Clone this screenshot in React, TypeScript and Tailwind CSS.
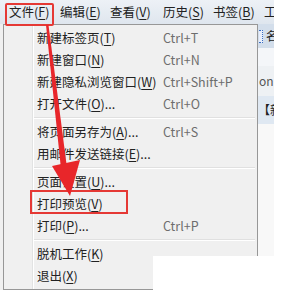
import React from "react";

const font = "font-['Noto_Sans_CJK_SC','Microsoft_YaHei',sans-serif]";

type Item = { pre: string; key: string; post?: string; sc?: string } | "sep";

const items: Item[] = [
  { pre: "新建标签页(", key: "T", post: ")", sc: "Ctrl+T" },
  { pre: "新建窗口(", key: "N", post: ")", sc: "Ctrl+N" },
  { pre: "新建隐私浏览窗口(", key: "W", post: ")", sc: "Ctrl+Shift+P" },
  { pre: "打开文件(", key: "O", post: ")...", sc: "Ctrl+O" },
  "sep",
  { pre: "将页面另存为(", key: "A", post: ")...", sc: "Ctrl+S" },
  { pre: "用邮件发送链接(", key: "E", post: ")..." },
  "sep",
  { pre: "页面设置(", key: "U", post: ")..." },
  { pre: "打印预览(", key: "V", post: ")" },
  { pre: "打印(", key: "P", post: ")...", sc: "Ctrl+P" },
  "sep",
  { pre: "脱机工作(", key: "K", post: ")" },
  { pre: "退出(", key: "X", post: ")" },
];

const bar = [
  { pre: "文件(", key: "F", w: "w-[51px]" },
  { pre: "编辑(", key: "E", w: "w-[50px]" },
  { pre: "查看(", key: "V", w: "w-[53px]" },
  { pre: "历史(", key: "S", w: "w-[50px]" },
  { pre: "书签(", key: "B", w: "w-[51px]" },
];

export default function App() {
  return (
    <div className={`relative w-[293px] h-[304px] overflow-hidden bg-white ${font} text-[12.5px] text-[#222]`}>
      <div className="flex flex-col">
        {/* menubar */}
        <div className="flex h-[24px] w-[274px] items-center overflow-hidden bg-gradient-to-b from-[#edf1f6] to-[#dfe6ee] pl-[9px] pt-[1px] leading-none">
          {bar.map((b) => (
            <div key={b.key} className={`${b.w} shrink-0 whitespace-nowrap`}>
              {b.pre}
              <span className="underline underline-offset-2">{b.key}</span>)
            </div>
          ))}
          <div className="shrink-0 whitespace-nowrap">工</div>
        </div>
        <div className="flex">
          <div className="w-[3px] h-[266px] bg-[#f0f0f0]" />
          {/* dropdown menu */}
          <div className="relative w-[255px] h-[266px] border border-[#979797] bg-[#f0f0f0] p-[2px]">
            <div className="absolute left-[28px] top-0 bottom-0 w-[2px] border-l border-[#e2e3e3] border-r border-r-white" />
            {items.map((it, i) =>
              it === "sep" ? (
                <div key={i} className="flex h-[6px] items-center pl-[27px]">
                  <div className="h-[2px] w-full border-t border-[#e0e0e0] border-b border-b-white" />
                </div>
              ) : (
                <div key={i} className="relative flex h-[22px] items-center whitespace-nowrap leading-none">
                  <div className="w-[157px] shrink-0 pl-[31px]">
                    {it.pre}
                    <span className="underline underline-offset-2">{it.key}</span>
                    {it.post}
                  </div>
                  {it.sc && <div className="text-[#6d6d6d]">{it.sc}</div>}
                </div>
              )
            )}
          </div>
          {/* strip of page behind */}
          <div className="flex w-[16px] flex-col overflow-hidden">
            <div className="flex h-[24px] items-center bg-[#d3deeb] whitespace-nowrap">
              <div className="ml-[1px] h-[13px] w-[4px] shrink-0 border border-l-0 border-dotted border-[#3b6fc4] bg-[#e8eefb]" />
              <div className="ml-[3px] text-[12px]">名</div>
            </div>
            <div className="h-[18px] bg-[#f4f6f9]" />
            <div className="flex h-[30px] items-center bg-[#eef1f4] pl-[1px] text-[12px] text-[#555] whitespace-nowrap">on</div>
            <div className="flex h-[28px] items-center bg-[#dfe8f2] whitespace-nowrap text-[12px]">【新</div>
            <div className="flex-1 bg-[#f8f8f8]" />
          </div>
        </div>
      </div>

      {/* white cover bottom-right */}
      <div className="absolute left-[153px] top-[256px] w-[140px] h-[48px] bg-white" />

      {/* red highlight boxes */}
      <div className="absolute left-[5px] top-[3px] w-[49px] h-[23px] border-2 border-[#e53935] rounded-[2px]" />
      <div className="absolute left-[30px] top-[190px] w-[98px] h-[24px] border-2 border-[#e53935]" />

      {/* red arrow */}
      <svg className="absolute left-0 top-0" width="293" height="304" viewBox="0 0 293 304">
        <polygon points="46,25 48.5,25 67,168 61,169" fill="#e8262a" />
        <polygon points="52,166 80,160 70,196" fill="#e8262a" />
      </svg>
    </div>
  );
}
